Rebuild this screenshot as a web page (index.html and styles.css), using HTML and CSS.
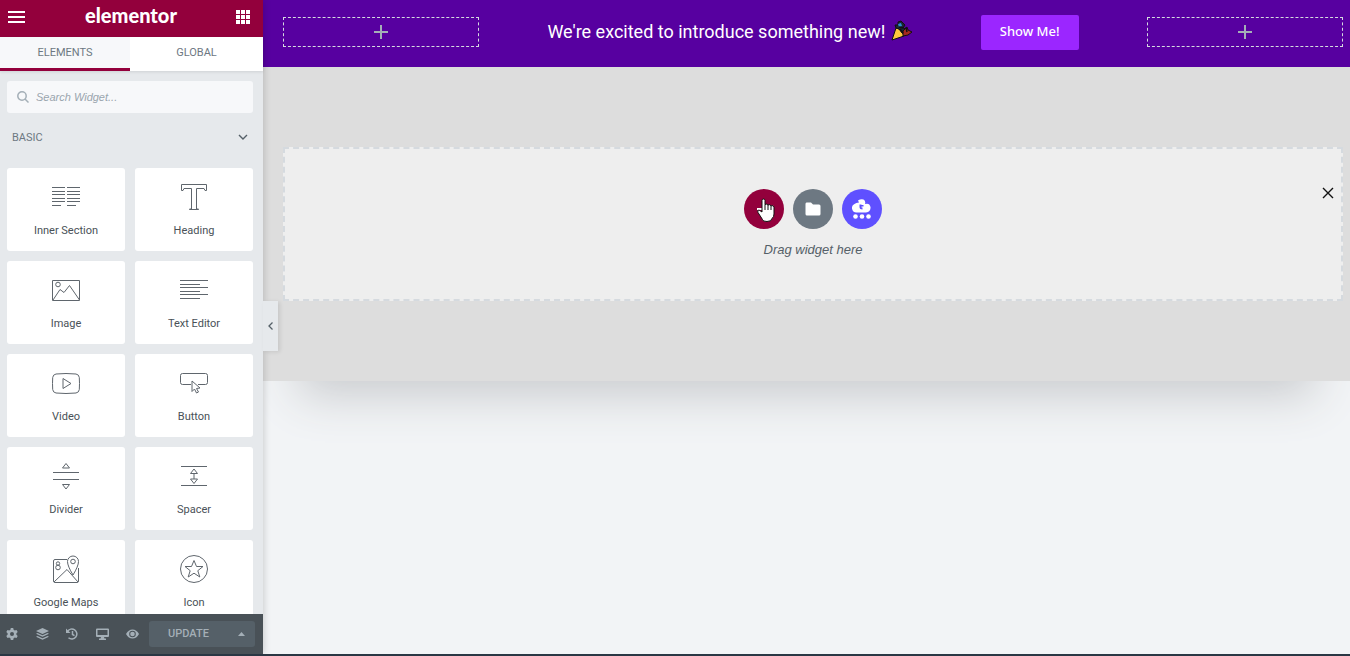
FILE: index.html
```html
<!DOCTYPE html>
<html lang="en">
<head>
    <meta charset="UTF-8">
    <title>Elementor</title>
    <link rel="stylesheet" href="styles.css">
</head>
<body>
    <div class="editor">
        <aside class="panel">
            <header class="panel-header">
                <button class="icon-button" aria-label="Menu">
                    <svg width="18" height="14" viewBox="0 0 18 14" fill="#fff"><path d="M0 1h17v2H0zM0 6h17v2H0zM0 11h17v2H0z"/></svg>
                </button>
                <span class="logo">elementor</span>
                <button class="icon-button" aria-label="Widgets">
                    <svg width="14" height="14" viewBox="0 0 14 14" fill="#fff"><path d="M0 0h4v4H0zM5 0h4v4H5zM10 0h4v4h-4zM0 5h4v4H0zM5 5h4v4H5zM10 5h4v4h-4zM0 10h4v4H0zM5 10h4v4H5zM10 10h4v4h-4z"/></svg>
                </button>
            </header>

            <nav class="tabs">
                <button class="tab active">ELEMENTS</button>
                <button class="tab">GLOBAL</button>
            </nav>

            <div class="panel-content">
                <label class="search">
                    <svg width="12" height="12" viewBox="0 0 12 12" fill="none" stroke="#a4afb7" stroke-width="1.5"><circle cx="5" cy="5" r="4.2"/><path d="M8 8l3.5 3.5"/></svg>
                    <input type="text" placeholder="Search Widget..." aria-label="Search Widget">
                </label>

                <button class="category">
                    <span>BASIC</span>
                    <svg width="10" height="6" viewBox="0 0 10 6" fill="none" stroke="#556068" stroke-width="1.4"><path d="M1 1l4 4 4-4"/></svg>
                </button>

                <div class="widgets">
                    <button class="widget">
                        <svg class="widget-icon" viewBox="0 0 28 28"><path d="M0 4.5h13M15 4.5h13M0 8.5h13M15 8.5h13M0 11.5h13M15 11.5h13M0 15.5h13M15 15.5h13M0 18.5h13M15 18.5h13M0 22.5h9M15 22.5h9"/></svg>
                        <span>Inner Section</span>
                    </button>
                    <button class="widget">
                        <svg class="widget-icon" viewBox="0 0 28 28"><path d="M1.5 1.5h25v6h-1.5l-1-2h-7.500v20.500h2v.5h-9v-.5h2V5.500H4l-1 2H1.500z"/></svg>
                        <span>Heading</span>
                    </button>
                    <button class="widget">
                        <svg class="widget-icon" viewBox="0 0 28 28"><path d="M.5 4.500h27v20H.500zM1 24l7-10.500 4 3 5.500-7L27.500 24"/><circle cx="6" cy="8.500" r="2.300"/></svg>
                        <span>Image</span>
                    </button>
                    <button class="widget">
                        <svg class="widget-icon" viewBox="0 0 28 28"><path d="M0 4.5h28M0 8.5h20M0 11.5h28M0 15.5h20M0 18.5h28M0 22.5h20"/></svg>
                        <span>Text Editor</span>
                    </button>
                    <button class="widget">
                        <svg class="widget-icon" viewBox="0 0 28 28"><path d="M4 5q10-1 20 0 3 .5 3.300 3.500.4 6 0 12-.3 3-3.300 3.500-10 1-20 0-3-.5-3.300-3.500-.4-6 0-12Q1 5.500 4 5zM11 9.500v10l8-5z"/></svg>
                        <span>Video</span>
                    </button>
                    <button class="widget">
                        <svg class="widget-icon" viewBox="0 0 28 28"><path d="M11 15.500H2.500q-2 0-2-2v-7q0-2 2-2h23q2 0 2 2v7q0 2-2 2H18M12 12v10.500l2.500-2.500 2 4 2-1-2-3.500 3.500-.5z"/></svg>
                        <span>Button</span>
                    </button>
                    <button class="widget">
                        <svg class="widget-icon" viewBox="0 0 28 28"><path d="M1 10.500h26M1 17.500h26M14 1.500l3.500 4.500h-7zM14 27l3.500-4.500h-7z"/></svg>
                        <span>Divider</span>
                    </button>
                    <button class="widget">
                        <svg class="widget-icon" viewBox="0 0 28 28"><path d="M1 4.500h26M1 23.500h26M14 7l3.500 4.500h-7zM14 21.500l3.500-4.500h-7zM14 11.500v5.500"/></svg>
                        <span>Spacer</span>
                    </button>
                    <button class="widget">
                        <svg class="widget-icon" viewBox="0 0 28 28"><path d="M15 4.500H3q-1.500 0-1.500 1.500v20q0 1.500 1.500 1.500h22q1.500 0 1.500-1.500V13M2 27l13-12.500L26 27M21 20q-5.500-9-5.500-13.500a5.500 5.500 0 0 1 11 0Q26.500 11 21 20z"/><circle cx="21" cy="6.500" r="2.300"/><circle cx="6" cy="8.500" r="1.700"/><circle cx="6" cy="12.500" r="2.300"/></svg>
                        <span>Google Maps</span>
                    </button>
                    <button class="widget">
                        <svg class="widget-icon" viewBox="0 0 28 28"><circle cx="14" cy="14" r="13.500"/><path d="M14 5.500l2.500 6h6.500l-5.200 4.200 2 6.300-5.800-3.800L8.200 22l2-6.300L5 11.500h6.500z"/></svg>
                        <span>Icon</span>
                    </button>
                </div>
            </div>

            <footer class="panel-footer">
                <button class="tool" aria-label="Settings">
                    <svg width="12" height="12" viewBox="0 0 12 12"><path fill="#a4afb7" fill-rule="evenodd" d="M4.800 0h2.400l.4 1.700 1.200.7 1.700-.5 1.200 2.100-1.300 1.200v1.600l1.300 1.200-1.200 2.100-1.700-.5-1.200.7-.4 1.700H4.800l-.4-1.700-1.200-.7-1.700.5L.3 8l1.300-1.200V5.200L.3 4l1.200-2.100 1.700.5 1.200-.7zM6 4a2 2 0 1 0 0 4 2 2 0 0 0 0-4z"/></svg>
                </button>
                <button class="tool" aria-label="Navigator">
                    <svg width="13" height="12" viewBox="0 0 13 12" fill="#a4afb7"><path d="M6.500 0L13 3 6.500 6 0 3zM0 5.700l1.500-.7 5 2.300 5-2.300 1.500.7-6.500 3zM0 8.700L1.500 8l5 2.300 5-2.300 1.500.7-6.500 3z"/></svg>
                </button>
                <button class="tool" aria-label="History">
                    <svg width="12" height="12" viewBox="0 0 12 12" fill="none" stroke="#a4afb7" stroke-width="1.5"><path d="M1.500 3.500A5 5 0 1 1 2.500 9.700M6.500 3v3.500l2 1.200"/><path fill="#a4afb7" stroke="none" d="M0 .5V5h4.500z"/></svg>
                </button>
                <button class="tool" aria-label="Responsive Mode">
                    <svg width="13" height="12" viewBox="0 0 13 12"><path fill="#a4afb7" fill-rule="evenodd" d="M1 .5h11q1 0 1 1V8q0 1-1 1H8l.5 1.500H10V12H3v-1.500h1.500L5 9H1Q0 9 0 8V1.500q0-1 1-1zM1.500 2v5h10V2z"/></svg>
                </button>
                <button class="tool" aria-label="Preview Changes">
                    <svg width="13" height="10" viewBox="0 0 13 10"><path fill="#a4afb7" fill-rule="evenodd" d="M6.500.5Q10.500.5 13 5q-2.500 4.500-6.500 4.500T0 5Q2.500.5 6.500.5zm0 1.200a3.300 3.300 0 1 0 0 6.600 3.300 3.300 0 0 0 0-6.600z"/><circle cx="6.500" cy="5" r="2.300" fill="#a4afb7"/></svg>
                </button>
                <div class="publish">
                    <button class="update">UPDATE</button>
                    <button class="update-options" aria-label="Save options">
                        <svg width="7" height="4" viewBox="0 0 7 4" fill="#a4afb7"><path d="M0 4l3.500-4L7 4z"/></svg>
                    </button>
                </div>
            </footer>
        </aside>

        <main class="preview">
            <button class="panel-toggle" aria-label="Hide panel">
                <svg width="5" height="8" viewBox="0 0 5 8" fill="none" stroke="#556068" stroke-width="1.3"><path d="M4.500.5L1 4l3.500 3.500"/></svg>
            </button>

            <section class="banner">
                <button class="empty-column" aria-label="Add widget">
                    <svg width="14" height="14" viewBox="0 0 14 14" fill="#a4afb7"><path d="M6 0h2v6h6v2H8v6H6V8H0V6h6z"/></svg>
                </button>
                <div class="message">
                    <span>We're excited to introduce something new!</span>
                    <svg width="22" height="22" viewBox="0 0 22 22" stroke="#111" stroke-linejoin="round">
                        <path fill="#ffc83d" d="M2 20L6 8q6 1 8 8z"/>
                        <path fill="#1b2733" d="M6 8l-1-3 3 0V2l3-1 2 2 2 2-2 3 3 1-1 5-3-1-3-4z"/>
                        <path fill="#2b8bd6" stroke="none" d="M8 4l3-1 1 3-3 1z"/>
                        <path fill="#a52a1d" d="M13 11l4-4 1 3 4 2-4 3-5 1z"/>
                        <path fill="none" stroke-width="1.5" d="M9 7l4 1M10 9l3 4M16 7l1 5"/>
                    </svg>
                </div>
                <button class="show-me">Show Me!</button>
                <button class="empty-column" aria-label="Add widget">
                    <svg width="14" height="14" viewBox="0 0 14 14" fill="#a4afb7"><path d="M6 0h2v6h6v2H8v6H6V8H0V6h6z"/></svg>
                </button>
            </section>

            <section class="add-section">
                <div class="drop-area">
                    <button class="close" aria-label="Close">
                        <svg width="12" height="12" viewBox="0 0 12 12" fill="none" stroke="#111" stroke-width="1.4"><path d="M1 1l10 10M11 1L1 11"/></svg>
                    </button>
                    <div class="add-buttons">
                        <button class="round add" aria-label="Add New Section">
                            <svg width="14" height="14" viewBox="0 0 14 14" fill="#fff"><path d="M6 0h2v6h6v2H8v6H6V8H0V6h6z"/></svg>
                            <svg class="pointer" width="18" height="24" viewBox="0 0 18 24" fill="#fff" stroke="#111" stroke-linejoin="round"><path d="M5 14V2.500q0-1.500 1.500-1.500T8 2.500V6.500q2-1 3 .5 2-1 3 .8 2.500-.8 3 1.200v7q0 3-2 4.500-.5 3-5 3t-4.500-2L1 14.500Q0 12 2 12z"/><path d="M8 6.500V12M11 7v5M14 8v4" fill="none"/></svg>
                        </button>
                        <button class="round folder" aria-label="Add Template">
                            <svg width="16" height="14" viewBox="0 0 16 14" fill="#fff"><path d="M1.500 0.500H6L8 2.500h6q1.500 0 1.500 1.500v8q0 1.500-1.500 1.500H2Q.5 13.500.5 12V2Q.5.500 1.500.500z"/></svg>
                        </button>
                        <button class="round cloud" aria-label="Cloud Templates">
                            <svg width="20" height="22" viewBox="0 0 20 22" fill="#fff"><path fill-rule="evenodd" d="M5 14.500a4.500 4.500 0 0 1-2.500-8.500Q4 4.500 7 4.500L6 2.500Q9 .5 11.500 1.500 14 3 13 6q4.500-1.500 5.500 3 .5 5-4.500 5.500zM7.500 6.500v2.500q0 2.500 3 2.500V9.500H9.500V8.500h2V7h-2v-.5z"/><circle cx="3.500" cy="18.500" r="2.300"/><circle cx="10" cy="18.500" r="2.300"/><circle cx="16.500" cy="18.500" r="2.300"/></svg>
                        </button>
                    </div>
                    <p class="drag-title">Drag widget here</p>
                </div>
            </section>
        </main>
    </div>
</body>
</html>
```

FILE: styles.css
```css
* {
    box-sizing: border-box;
}
body {
    margin: 0;
    font-family: Roboto, "Liberation Sans", sans-serif;
    color: #556068;
}
button {
    margin: 0;
    padding: 0;
    border: 0;
    background: none;
    font: inherit;
    color: inherit;
    cursor: pointer;
}
svg {
    display: block;
    flex-shrink: 0;
}
.editor {
    display: flex;
    height: 100vh;
    border-bottom: 2px solid #2a3744;
    background: #f2f4f6;
    overflow: hidden;
}

/* Left panel */
.panel {
    display: flex;
    flex-direction: column;
    flex: 0 0 263px;
    z-index: 1;
    background: #e6e9ec;
    box-shadow: 0 0 8px rgba(0, 0, 0, 0.2);
}
.panel-header {
    display: flex;
    align-items: center;
    justify-content: space-between;
    height: 37px;
    padding: 0 13px 4px 8px;
    background: #93003c;
}
.logo {
    padding-bottom: 4px;
    font-family: Lato, sans-serif;
    font-size: 20px;
    font-weight: 900;
    line-height: 20px;
    color: #fff;
}
.tabs {
    display: flex;
    height: 34px;
    background: #fff;
    box-shadow: 0 1px 3px rgba(0, 0, 0, 0.1);
}
.tab {
    flex: 1;
    border-bottom: 3px solid transparent;
    font-size: 11px;
    color: #6d7882;
}
.tab.active {
    flex: 0 0 130px;
    border-bottom-color: #93003c;
    background: #f7f8fa;
}
.panel-content {
    flex: 1;
    min-height: 0;
    padding: 10px 10px 0 7px;
    overflow: hidden;
}
.search {
    display: flex;
    align-items: center;
    gap: 7px;
    height: 32px;
    padding: 0 10px;
    border-radius: 3px;
    background: #f7f8fa;
}
.search input {
    flex: 1;
    min-width: 0;
    padding: 0;
    border: 0;
    outline: 0;
    background: none;
    font: italic 11px "Liberation Sans", sans-serif;
}
.search input::placeholder {
    color: #9aa5ae;
}
.category {
    display: flex;
    align-items: center;
    justify-content: space-between;
    width: 100%;
    height: 48px;
    margin-bottom: 7px;
    padding: 0 5px;
    font-size: 11px;
    color: #6d7882;
}
.widgets {
    display: grid;
    grid-template-columns: 1fr 1fr;
    gap: 10px;
}
.widget {
    display: flex;
    flex-direction: column;
    align-items: center;
    gap: 13px;
    padding: 15px 0 13px;
    border-radius: 3px;
    background: #fff;
    font-size: 11px;
    line-height: 14px;
    color: #495157;
}
.widget-icon {
    width: 28px;
    height: 28px;
    fill: none;
    stroke: #5f666d;
    stroke-width: 1;
}
.panel-footer {
    display: flex;
    align-items: center;
    height: 40px;
    padding-right: 8px;
    padding-bottom: 1px;
    background: #495157;
}
.tool {
    display: flex;
    justify-content: center;
    width: 30px;
}
.tool:first-child {
    width: 24px;
}
.tool:nth-child(2) {
    margin-left: 3px;
}
.publish {
    display: flex;
    flex: 1;
    height: 26px;
    margin-left: 2px;
    border-radius: 3px;
    background: #556068;
    color: #a4afb7;
}
.update {
    flex: 1;
    font-size: 11px;
    font-weight: 500;
}
.update-options {
    display: flex;
    align-items: center;
    justify-content: center;
    width: 27px;
}

/* Page preview */
.preview {
    position: relative;
    flex: 1;
    min-width: 0;
}
.panel-toggle {
    position: absolute;
    top: 301px;
    left: 0;
    z-index: 1;
    display: flex;
    align-items: center;
    justify-content: center;
    width: 15px;
    height: 50px;
    background: #e6e9ec;
    box-shadow: 2px 1px 4px rgba(0, 0, 0, 0.1);
}
.banner {
    display: flex;
    align-items: center;
    justify-content: space-between;
    height: 67px;
    padding: 0 7px 3px 20px;
    background: #5700a0;
}
.empty-column {
    display: flex;
    align-items: center;
    justify-content: center;
    width: 196px;
    height: 30px;
    border: 1px dashed #d5dadf;
}
.message {
    display: flex;
    align-items: center;
    gap: 5px;
    padding-bottom: 2px;
    font-size: 18px;
    color: #fff;
}
.show-me {
    height: 35px;
    padding: 0 19px 2px;
    border-radius: 2px;
    background: #9b26ff;
    font-family: "Noto Sans", sans-serif;
    font-size: 13px;
    font-weight: 500;
    color: #fff;
}
.add-section {
    padding: 80px 7px 80px 20px;
    background: #ddd;
    box-shadow: 0 50px 44px -36px #c9cbce;
}
.drop-area {
    position: relative;
    display: flex;
    flex-direction: column;
    align-items: center;
    gap: 12px;
    padding: 40px 0;
    border: 2px dashed #d5dadf;
    background: #eee;
}
.close {
    position: absolute;
    top: 38px;
    right: 7px;
}
.add-buttons {
    display: flex;
    gap: 9px;
}
.round {
    position: relative;
    display: flex;
    align-items: center;
    justify-content: center;
    width: 40px;
    height: 40px;
    border-radius: 50%;
}
.add {
    background: #93003c;
}
.folder {
    background: #6d7882;
}
.cloud {
    background: #5f50ff;
}
.pointer {
    position: absolute;
    top: 9px;
    left: 13px;
}
.drag-title {
    margin: 0;
    font-family: "Liberation Sans", sans-serif;
    font-size: 13px;
    font-style: italic;
    line-height: 18px;
}
```
